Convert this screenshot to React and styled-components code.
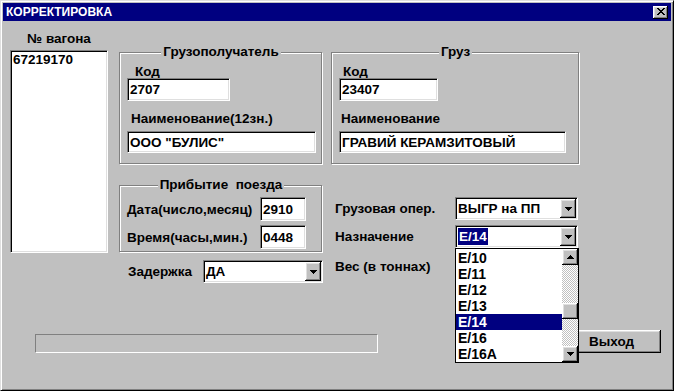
import React from 'react';
import styled, { createGlobalStyle, css } from 'styled-components';

const Global = createGlobalStyle`
  html, body { margin: 0; padding: 0; background: #c0c0c0; }
  body { font-family: "Liberation Sans", Arial, sans-serif; }
`;

const sunken = css`
  box-sizing: border-box;
  border: 1px solid;
  border-color: #808080 #fff #fff #808080;
  box-shadow: inset 1px 1px #000, inset -1px -1px #dfdfdf;
  padding: 1px;
  background: #fff;
`;

const raised = css`
  box-sizing: border-box;
  background: #c0c0c0;
  box-shadow: inset -1px -1px #000, inset 1px 1px #fff, inset -2px -2px #808080, inset 2px 2px #dfdfdf;
`;

const Window = styled.div`
  box-sizing: border-box;
  width: 674px;
  height: 391px;
  background: #c0c0c0;
  border: 1px solid;
  border-color: #dfdfdf #000 #000 #dfdfdf;
  box-shadow: inset 1px 1px #fff, inset -1px -1px #808080;
  padding: 2px;
  display: flex;
  flex-direction: column;
  font: bold 13.5px "Liberation Sans", Arial, sans-serif;
  color: #000;
`;

const TitleBar = styled.div`
  height: 18px;
  background: #000080;
  color: #fff;
  font-size: 12px;
  font-weight: bold;
  display: flex;
  align-items: center;
  justify-content: space-between;
  padding: 0 3px 0 3px;
`;

const CloseButton = styled.div`
  ${raised};
  width: 15px;
  height: 13px;
  display: flex;
  align-items: center;
  justify-content: center;
  padding-bottom: 1px;
`;

const Content = styled.div`
  flex: 1;
  display: flex;
  flex-direction: column;
  padding: 10px 0 35px 0;
`;

const TopRow = styled.div`
  display: flex;
  align-items: flex-start;
`;

const LeftCol = styled.div`
  margin-left: 7px;
  width: 98px;
  display: flex;
  flex-direction: column;
  align-items: center;
`;

const ColLabel = styled.div`
  line-height: 16px;
`;

const ListBox = styled.div`
  ${sunken};
  margin-top: 3px;
  width: 98px;
  height: 203px;
  padding: 1px 2px;
  line-height: 16px;
  align-self: stretch;
`;

const RightArea = styled.div`
  margin-left: 11px;
  margin-top: 13px;
  display: flex;
  flex-direction: column;
`;

const GroupsRow = styled.div`
  display: flex;
  gap: 9px;
`;

const Group = styled.fieldset`
  box-sizing: border-box;
  width: ${(p) => p.$width}px;
  margin: 0;
  min-width: 0;
  padding: 0 6px ${(p) => p.$pb}px 7px;
  border: 1px solid #808080;
  box-shadow: 1px 1px 0 #fff, inset 1px 1px 0 #fff;
  display: flex;
  flex-direction: column;
  align-items: flex-start;
`;

const Legend = styled.legend`
  margin: 0 auto;
  padding: 0 2px;
  line-height: 16px;
  background: #c0c0c0;
  white-space: pre;
`;

const FieldLabel = styled.div`
  line-height: 13px;
  padding-left: ${(p) => p.$indent || 0}px;
  margin-top: ${(p) => p.$mt || 0}px;
`;

const TextBox = styled.div`
  ${sunken};
  width: ${(p) => p.$width}px;
  height: ${(p) => p.$height || 23}px;
  margin-top: ${(p) => p.$mt || 0}px;
  padding: 1px 2px;
  display: flex;
  align-items: center;
  white-space: pre;
`;

const MiddleRow = styled.div`
  margin-top: 13px;
  display: flex;
  align-items: flex-start;
`;

const LeftSub = styled.div`
  width: 203px;
  display: flex;
  flex-direction: column;
`;

const ArrivalRow = styled.div`
  display: grid;
  grid-template-columns: 133px 46px;
  align-items: center;
  margin-top: 4px;
`;

const DelayRow = styled.div`
  display: grid;
  grid-template-columns: 84px 120px;
  align-items: center;
  margin-top: 8px;
  padding-left: 9px;
  margin-left: -9px;
  width: 204px;
  box-sizing: border-box;
`;

const DelayLabel = styled.div`
  padding-left: 9px;
`;

const RightSub = styled.div`
  margin-left: 13px;
  padding-top: 20px;
  display: grid;
  grid-template-columns: 120px 124px;
  row-gap: 5px;
  align-items: center;
`;

const FormLabel = styled.div`
  line-height: 16px;
  margin-top: ${(p) => p.$mt || 0}px;
`;

const ComboWrap = styled.div`
  position: relative;
`;

const Combo = styled.div`
  ${sunken};
  width: ${(p) => p.$width}px;
  height: 23px;
  display: flex;
  align-items: stretch;
`;

const ComboText = styled.div`
  flex: 1;
  display: flex;
  align-items: center;
  padding-left: 1px;
  white-space: pre;
`;

const Highlight = styled.span`
  background: #000080;
  color: #fff;
  padding: 0 1px;
  line-height: 17px;
`;

const ArrowButton = styled.div`
  ${raised};
  width: 16px;
  display: flex;
  align-items: center;
  justify-content: center;
`;

const DropList = styled.div`
  position: absolute;
  top: 100%;
  left: 0;
  z-index: 10;
  box-sizing: border-box;
  width: 124px;
  height: 115px;
  border: 1px solid #000;
  background: #fff;
  display: flex;
  padding-top: 1px;
`;

const Items = styled.div`
  flex: 1;
  display: flex;
  flex-direction: column;
`;

const Item = styled.div`
  height: 16px;
  line-height: 16px;
  padding-left: 2px;
  background: ${(p) => (p.$selected ? '#000080' : 'transparent')};
  color: ${(p) => (p.$selected ? '#fff' : '#000')};
  font-size: 14px;
`;

const ScrollBar = styled.div`
  width: 16px;
  display: flex;
  flex-direction: column;
  margin-top: -1px;
`;

const ScrollBtn = styled.div`
  ${raised};
  width: 16px;
  height: 16px;
  display: flex;
  align-items: center;
  justify-content: center;
`;

const Track = styled.div`
  flex: 1;
  background: repeating-conic-gradient(#c0c0c0 0 25%, #fff 0 50%) 0 0 / 2px 2px;
`;

const Thumb = styled.div`
  ${raised};
  width: 16px;
  height: 16px;
`;

const BottomRow = styled.div`
  margin-top: auto;
  display: flex;
  align-items: flex-end;
  padding-left: 32px;
`;

const Progress = styled.div`
  box-sizing: border-box;
  width: 343px;
  height: 19px;
  border: 1px solid;
  border-color: #808080 #fff #fff #808080;
`;

const ExitButton = styled.div`
  ${raised};
  margin-left: 182px;
  width: 101px;
  height: 23px;
  display: flex;
  align-items: center;
  justify-content: center;
  padding-left: 2px;
`;

const DownArrow = () => (
  <svg width="7" height="4" viewBox="0 0 7 4" shapeRendering="crispEdges">
    <path d="M0 0h7v1H0zM1 1h5v1H1zM2 2h3v1H2zM3 3h1v1H3z" fill="#000" />
  </svg>
);

const UpArrow = () => (
  <svg width="7" height="4" viewBox="0 0 7 4" shapeRendering="crispEdges">
    <path d="M3 0h1v1H3zM2 1h3v1H2zM1 2h5v1H1zM0 3h7v1H0z" fill="#000" />
  </svg>
);

const CloseGlyph = () => (
  <svg width="8" height="7" viewBox="0 0 8 7" shapeRendering="crispEdges">
    <path
      d="M0 0h2v1H0zM6 0h2v1H6zM1 1h2v1H1zM5 1h2v1H5zM2 2h4v1H2zM3 3h2v1H3zM2 4h4v1H2zM1 5h2v1H1zM5 5h2v1H5zM0 6h2v1H0zM6 6h2v1H6z"
      fill="#000"
    />
  </svg>
);

const items = ['Е/10', 'Е/11', 'Е/12', 'Е/13', 'Е/14', 'Е/16', 'Е/16А'];

export default function App() {
  return (
    <>
      <Global />
      <Window>
        <TitleBar>
          <span>КОРРЕКТИРОВКА</span>
          <CloseButton>
            <CloseGlyph />
          </CloseButton>
        </TitleBar>
        <Content>
          <TopRow>
            <LeftCol>
              <ColLabel>№ вагона</ColLabel>
              <ListBox>67219170</ListBox>
            </LeftCol>
            <RightArea>
              <GroupsRow>
                <Group $width={203} $pb={10}>
                  <Legend>Грузополучатель</Legend>
                  <FieldLabel $indent={8} $mt={5}>Код</FieldLabel>
                  <TextBox $width={103}>2707</TextBox>
                  <FieldLabel $indent={4} $mt={11}>Наименование(12зн.)</FieldLabel>
                  <TextBox $width={189} $height={22} $mt={6}>ООО "БУЛИС"</TextBox>
                </Group>
                <Group $width={248} $pb={10}>
                  <Legend>Груз</Legend>
                  <FieldLabel $indent={4} $mt={5}>Код</FieldLabel>
                  <TextBox $width={99}>23407</TextBox>
                  <FieldLabel $indent={2} $mt={11}>Наименование</FieldLabel>
                  <TextBox $width={227} $height={22} $mt={6}>ГРАВИЙ КЕРАМЗИТОВЫЙ</TextBox>
                </Group>
              </GroupsRow>
              <MiddleRow>
                <LeftSub>
                  <Group $width={203} $pb={2}>
                    <Legend>{'Прибытие  поезда'}</Legend>
                    <ArrivalRow>
                      <span>Дата(число,месяц)</span>
                      <TextBox $width={46} $height={24}>2910</TextBox>
                    </ArrivalRow>
                    <ArrivalRow>
                      <span>Время(часы,мин.)</span>
                      <TextBox $width={46} $height={24}>0448</TextBox>
                    </ArrivalRow>
                  </Group>
                  <DelayRow>
                    <DelayLabel>Задержка</DelayLabel>
                    <Combo $width={120}>
                      <ComboText>ДА</ComboText>
                      <ArrowButton>
                        <DownArrow />
                      </ArrowButton>
                    </Combo>
                  </DelayRow>
                </LeftSub>
                <RightSub>
                  <FormLabel>Грузовая опер.</FormLabel>
                  <Combo $width={123}>
                    <ComboText>ВЫГР на ПП</ComboText>
                    <ArrowButton>
                      <DownArrow />
                    </ArrowButton>
                  </Combo>
                  <FormLabel>Назначение</FormLabel>
                  <ComboWrap>
                    <Combo $width={123}>
                      <ComboText>
                        <Highlight>Е/14</Highlight>
                      </ComboText>
                      <ArrowButton>
                        <DownArrow />
                      </ArrowButton>
                    </Combo>
                    <DropList>
                      <Items>
                        {items.map((it) => (
                          <Item key={it} $selected={it === 'Е/14'}>
                            {it}
                          </Item>
                        ))}
                      </Items>
                      <ScrollBar>
                        <ScrollBtn>
                          <UpArrow />
                        </ScrollBtn>
                        <Track>
                          <Thumb style={{ marginTop: 38 }} />
                        </Track>
                        <ScrollBtn>
                          <DownArrow />
                        </ScrollBtn>
                      </ScrollBar>
                    </DropList>
                  </ComboWrap>
                  <FormLabel $mt={6}>Вес (в тоннах)</FormLabel>
                  <div />
                </RightSub>
              </MiddleRow>
            </RightArea>
          </TopRow>
          <BottomRow>
            <Progress />
            <ExitButton>Выход</ExitButton>
          </BottomRow>
        </Content>
      </Window>
    </>
  );
}
